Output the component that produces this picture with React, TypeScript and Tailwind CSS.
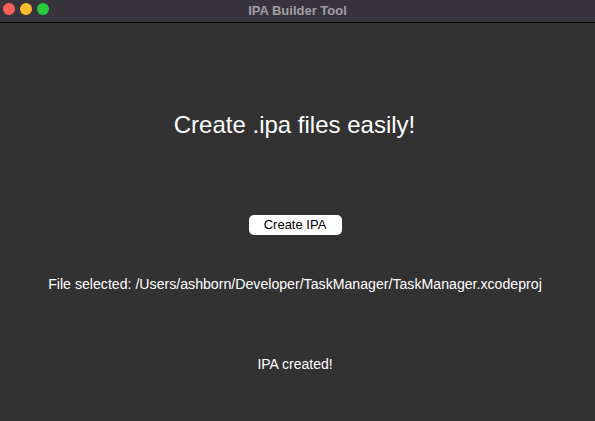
export default function App() {
  return (
    <div
      className="w-[595px] h-[421px] flex flex-col bg-[#323232] text-white overflow-hidden"
      style={{ fontFamily: '"Liberation Sans", Arial, sans-serif' }}
    >
      {/* Title bar */}
      <div className="relative h-[23px] shrink-0 flex items-center justify-center bg-[#38343c] border-b border-black">
        <div className="absolute left-[3px] top-[3px] flex gap-[5px]">
          <span className="w-[12px] h-[12px] rounded-full bg-[#fe5f57]" />
          <span className="w-[12px] h-[12px] rounded-full bg-[#febc2e]" />
          <span className="w-[12px] h-[12px] rounded-full bg-[#28c840]" />
        </div>
        <span className="text-[13px] font-bold text-[#a19ea6]">IPA Builder Tool</span>
      </div>

      {/* Content */}
      <div className="flex flex-col items-center pr-[5px]">
        <h1 className="mt-[88px] text-[24px] leading-[28px] mr-[1px]">Create .ipa files easily!</h1>
        <button className="mt-[76px] w-[93px] h-[20px] rounded-[5px] bg-white text-black text-[13px] leading-[20px]">
          Create IPA
        </button>
        <p className="mt-[41px] text-[14.15px] leading-[17px]">
          File selected: /Users/ashborn/Developer/TaskManager/TaskManager.xcodeproj
        </p>
        <p className="mt-[63px] text-[14px] leading-[17px]">IPA created!</p>
      </div>
    </div>
  );
}
